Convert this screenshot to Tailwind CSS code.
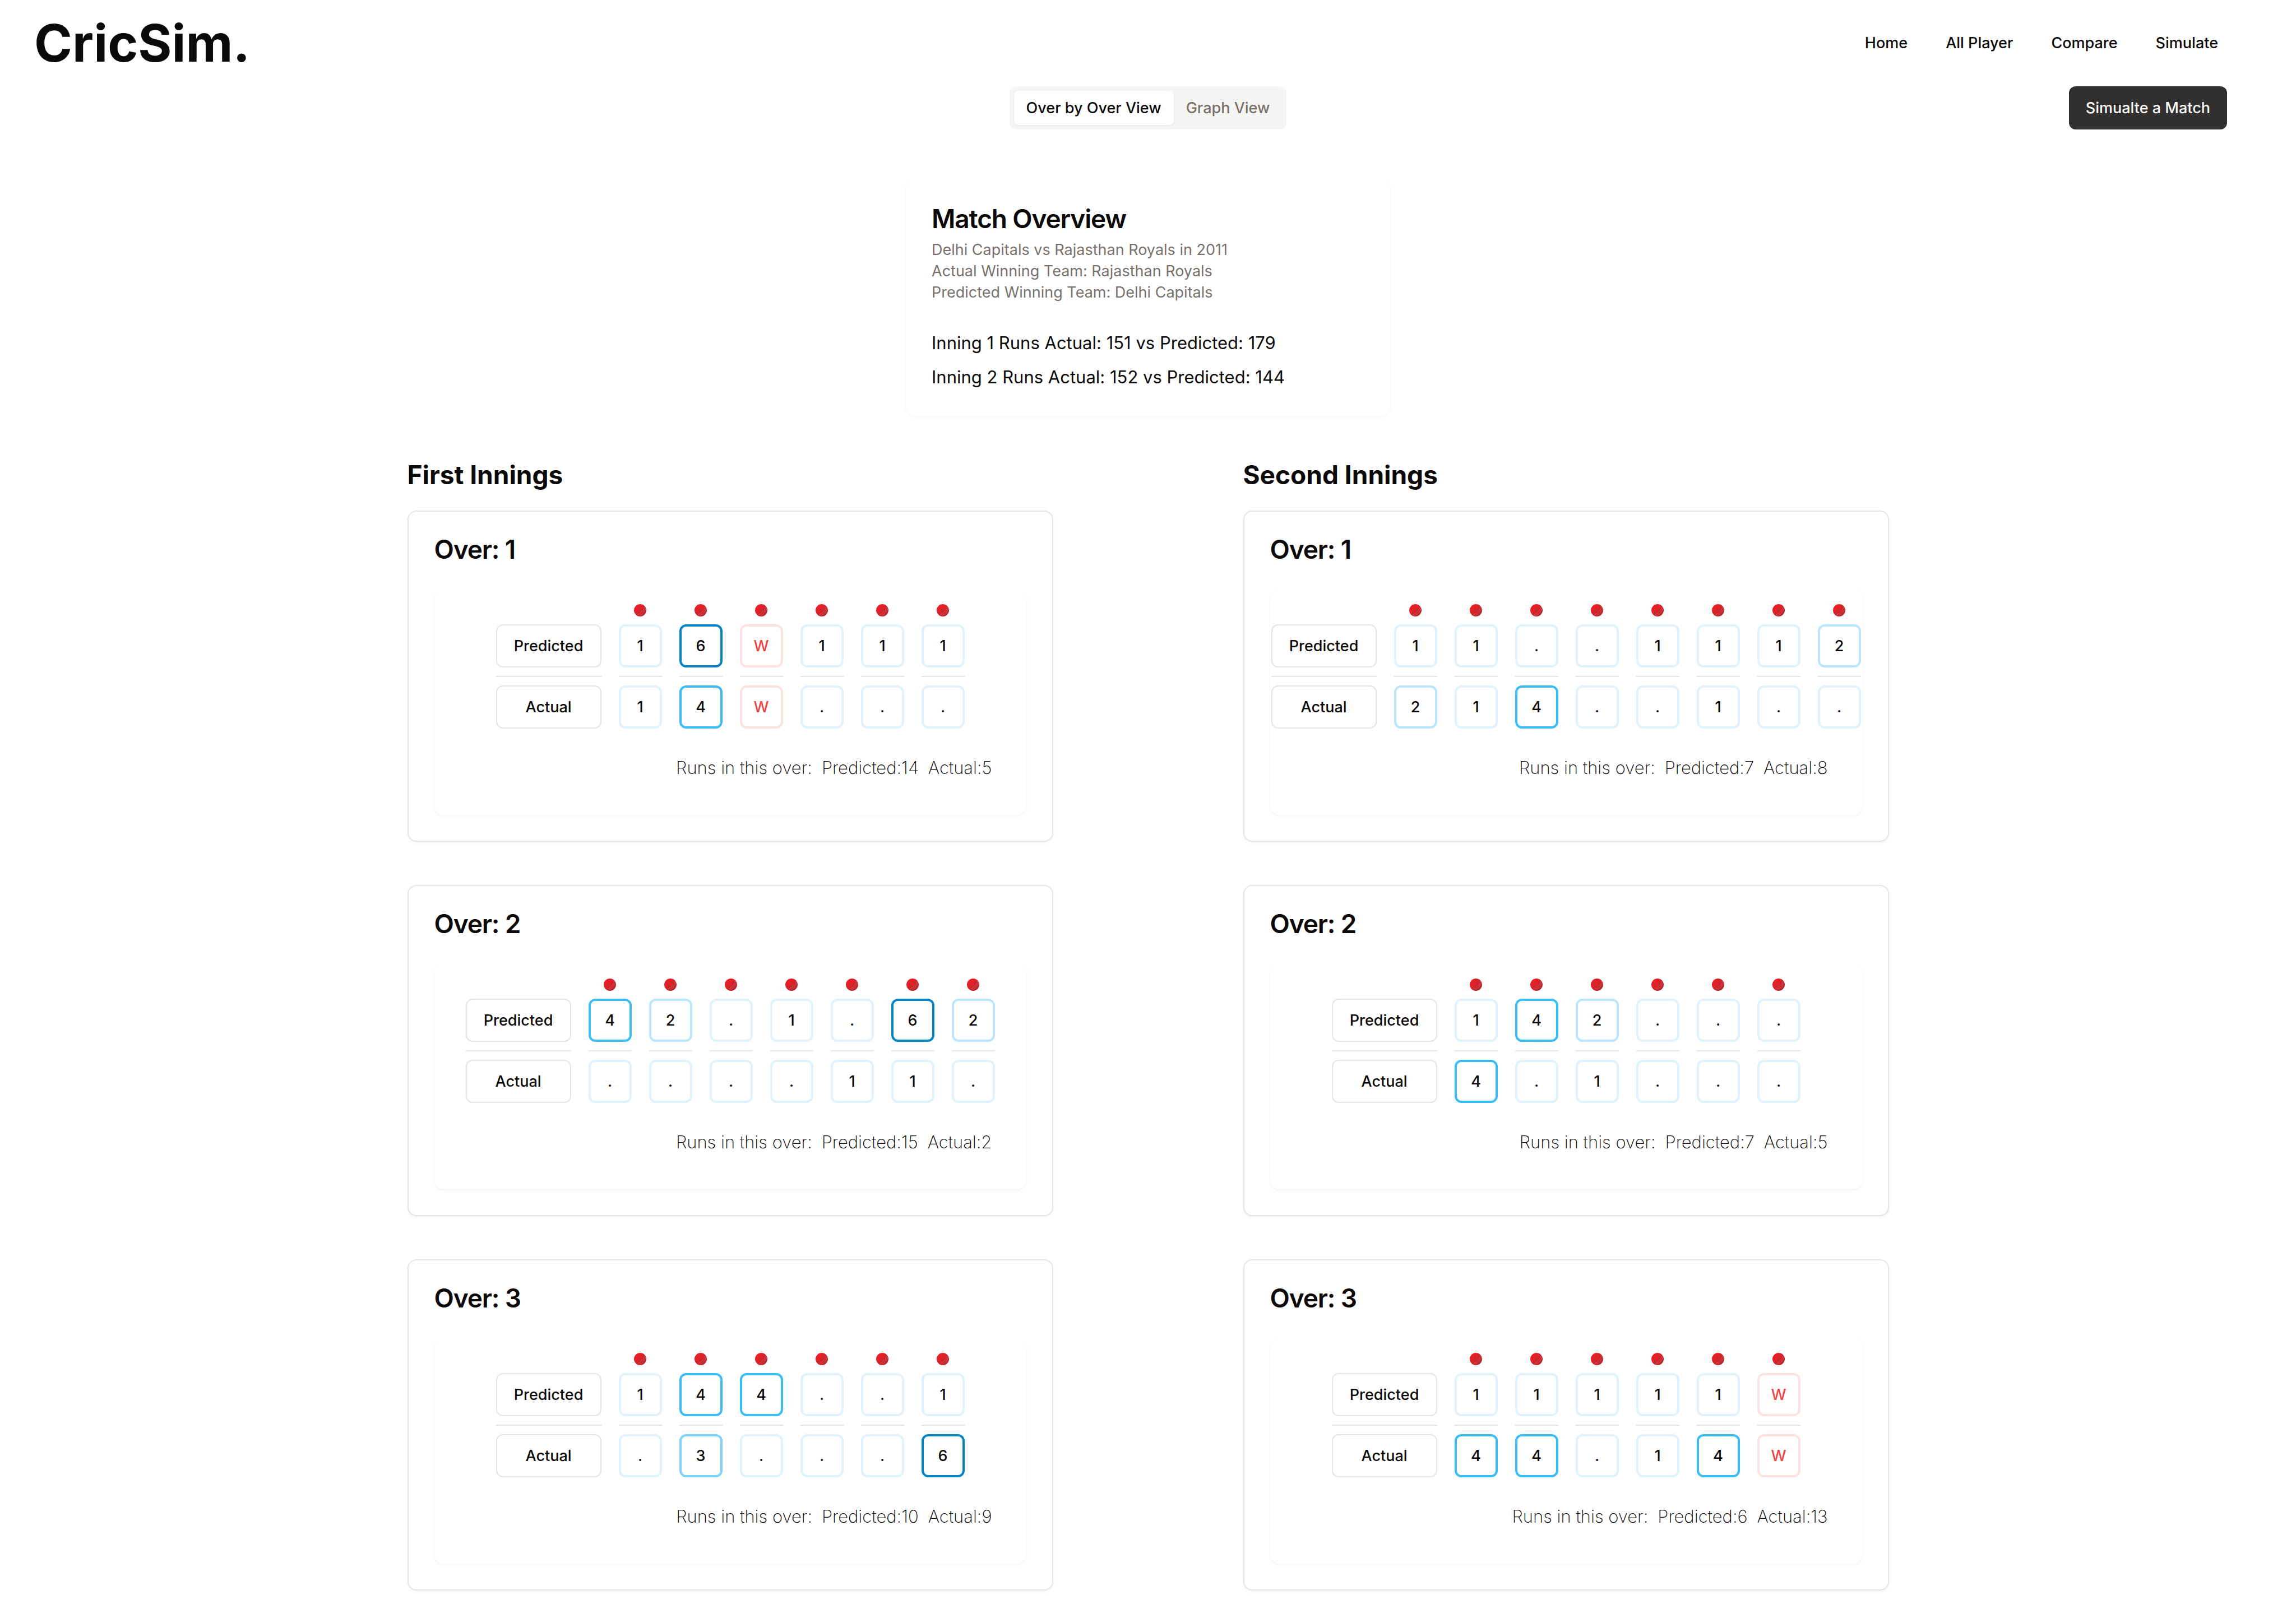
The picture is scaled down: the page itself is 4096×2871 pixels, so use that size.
<!DOCTYPE html>
<html lang="en">
<head>
<meta charset="utf-8">
<meta name="viewport" content="width=device-width, initial-scale=1">
<title>CricSim</title>
<script src="https://cdn.jsdelivr.net/npm/@tailwindcss/browser@4"></script>
</head>
<body class="bg-white font-['Inter',sans-serif] text-[#0c0a09]">
<header class="flex h-[154px] items-center justify-between pl-[61px] pr-[139px]">
  <a href="#" class="text-[92px] leading-none font-bold">CricSim.</a>
  <nav class="flex gap-[68px] text-[27px] leading-[38px] font-medium">
    <a href="#">Home</a>
    <a href="#">All Player</a>
    <a href="#">Compare</a>
    <a href="#">Simulate</a>
  </nav>
</header>

<main>
  <div class="grid grid-cols-[1fr_auto_1fr] items-center px-[123px]">
    <div role="tablist" class="col-start-2 flex h-[77px] items-center rounded-xl bg-[#f5f5f4] p-2 text-[27px] leading-[38px] font-medium text-[#78716c]">
      <button type="button" role="tab" aria-selected="true" class="h-full rounded-lg bg-white px-[22px] text-[#0c0a09] shadow-[0_2px_4px_0_rgb(0_0_0/0.05)]">Over by Over View</button>
      <button type="button" role="tab" aria-selected="false" class="h-full rounded-lg px-[22px]">Graph View</button>
    </div>
    <button type="button" class="h-[77px] justify-self-end rounded-xl bg-[#32302e] px-[30px] text-[27px] leading-[38px] font-medium text-[#fafaf9]">Simualte a Match</button>
  </div>

  <section class="mx-auto mt-[90px] w-full max-w-[864px] rounded-2xl bg-white p-[46px] shadow-[0_2px_4px_0_rgb(0_0_0/0.05)]">
    <h2 class="text-[46px] leading-none font-semibold tracking-tight">Match Overview</h2>
    <div class="mt-3.5 text-[27px] leading-[38px] text-[#78716c]">
      <p>Delhi Capitals vs Rajasthan Royals in 2011</p>
      <p>Actual Winning Team: Rajasthan Royals</p>
      <p>Predicted Winning Team: Delhi Capitals</p>
    </div>
    <div class="mt-12 flex flex-col gap-[15px] text-[31px] leading-[46px]">
      <p>Inning 1 Runs Actual: 151 vs Predicted: 179</p>
      <p>Inning 2 Runs Actual: 152 vs Predicted: 144</p>
    </div>
  </section>

  <div class="mt-[75px] flex justify-center gap-[339px] pb-[30px]">
    <section class="w-full max-w-[1152px]">
      <h2 class="text-[46px] leading-[61px] font-bold">First Innings</h2>
      <div id="first" class="mt-[33px] flex flex-col gap-[77px]"></div>
    </section>
    <section class="w-full max-w-[1152px]">
      <h2 class="text-[46px] leading-[61px] font-bold">Second Innings</h2>
      <div id="second" class="mt-[33px] flex flex-col gap-[77px]"></div>
    </section>
  </div>
</main>

<script>
// Each over: predicted balls, actual balls, predicted runs, actual runs.
const innings = {
  first: [
    ["16W111", "14W...", 14, 5],
    ["42.1.62", "....11.", 15, 2],
    ["144..1", ".3...6", 10, 9],
  ],
  second: [
    ["11..1112", "214..1..", 7, 8],
    ["142...", "4.1...", 7, 5],
    ["11111W", "44.14W", 6, 13],
  ],
};
const tone = {
  ".": "border-[#e0f2fe]",
  "1": "border-[#e0f2fe]",
  "2": "border-[#bae6fd]",
  "3": "border-[#7dd3fc]",
  "4": "border-[#38bdf8]",
  "6": "border-[#0284c7]",
  "W": "border-[#fee2e2] text-[#ef4444]",
};
const ball = `<div class="mb-3.5 size-[22px] rounded-full bg-linear-to-br from-[#ed1c24] from-20% to-[#b9272d] to-80%"><svg viewBox="0 0 22 22" class="size-full" aria-hidden="true"><path d="M19 5Q17.500 13 7 19M20.800 7.500Q18.500 15.500 9.500 20.500" fill="none" stroke="#e08a8d" stroke-width="0.700" stroke-dasharray="1.200 0.800"/></svg></div>`;
const line = `<div class="my-[15px] h-0.5 w-full bg-[#e5e5e5]"></div>`;
const box = (v) => `<div class="flex size-[77px] items-center justify-center rounded-xl border-4 ${tone[v]}">${v}</div>`;
const label = (t) => `<div class="flex h-[77px] w-[188px] items-center justify-center rounded-xl border-2 border-[#e5e5e5]">${t}</div>`;
const over = ([p, a, pr, ar], i) => `
  <article class="rounded-2xl border-2 border-[#e5e5e5] bg-white px-[46px] pt-[44px] pb-[46px] shadow-[0_2px_4px_0_rgb(0_0_0/0.05)]">
    <h3 class="text-[46px] leading-none font-semibold tracking-tight">Over: ${i + 1}</h3>
    <div class="mt-12 rounded-2xl bg-white pt-[27px] pb-[61px] shadow-[0_2px_4px_0_rgb(0_0_0/0.05)]">
      <div class="flex items-end justify-center gap-[31px] text-[27px] leading-[38px] font-medium">
        <div>${label("Predicted")}${line}${label("Actual")}</div>
        ${[...p].map((v, n) => `<div class="flex flex-col items-center">${ball}${box(v)}${line}${box(a[n])}</div>`).join("")}
      </div>
      <p class="mt-[47px] flex justify-end gap-[17px] pr-[61px] text-[31px] leading-[46px] font-extralight"><span>Runs in this over:</span><span>Predicted:${pr}</span><span>Actual:${ar}</span></p>
    </div>
  </article>`;
for (const id in innings) document.getElementById(id).innerHTML = innings[id].map(over).join("");
</script>
</body>
</html>
